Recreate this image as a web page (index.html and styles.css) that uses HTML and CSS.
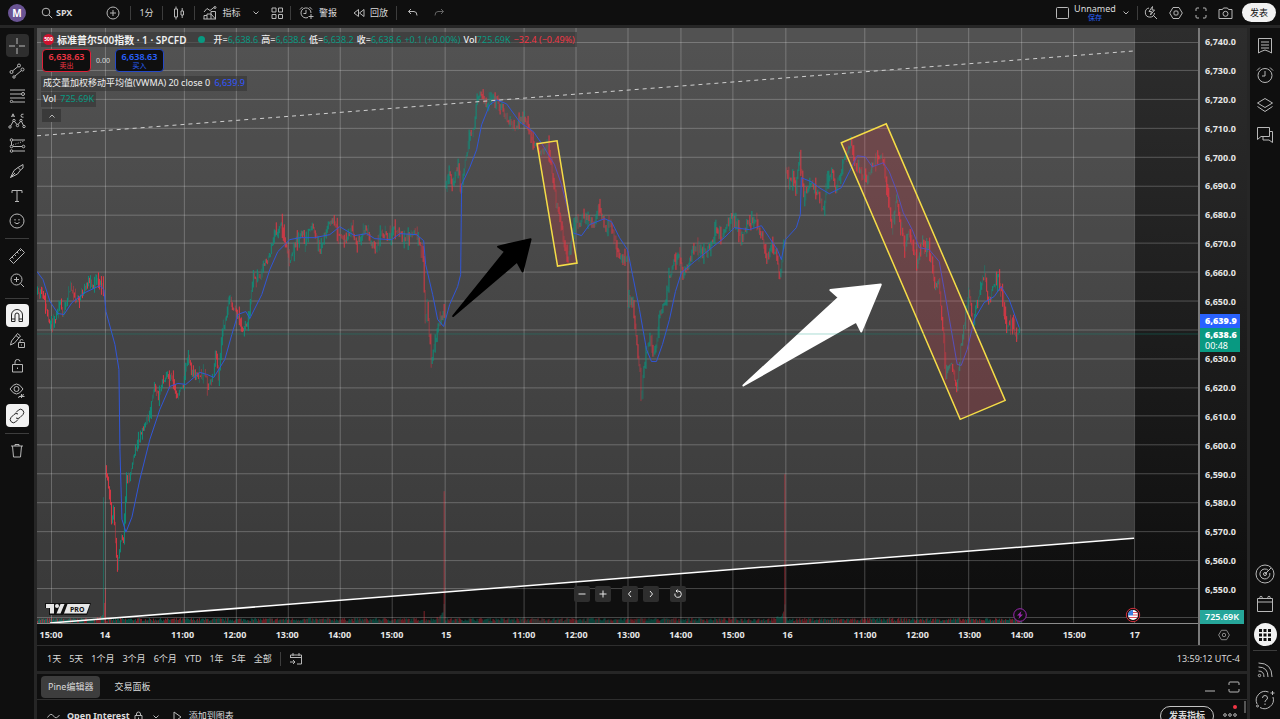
FILE: index.html
```
<!DOCTYPE html>
<html lang="zh-CN">
<head>
	<meta charset="UTF-8">
	<title>SPX 6,638.63</title>
	<link rel="stylesheet" href="styles.css">
</head>
<body>
	<header class="topbar">
		<button class="avatar">M</button>
		<button class="symbol">
			<svg width="12" height="12" viewBox="0 0 12 12"><circle cx="5" cy="5" r="3.8"/><path d="M8 8l3.2 3.2"/></svg>
			<b>SPX</b>
		</button>
		<button class="cell cell-add" aria-label="添加"><svg width="14" height="14" viewBox="0 0 14 14"><circle cx="7" cy="7" r="6"/><path d="M7 4v6M4 7h6"/></svg></button>
		<i class="sep"></i>
		<button class="cell">1分</button>
		<i class="sep"></i>
		<button class="cell" aria-label="K线图"><svg width="12" height="14" viewBox="0 0 12 14"><path d="M1.5 3h3v8h-3zM3 .5V3M3 11v2.5M8 5h2.5v4H8zM9.2 2v3M9.2 9v3"/></svg></button>
		<i class="sep"></i>
		<button class="cell cell-indicators">
			<svg width="14" height="14" viewBox="0 0 14 14"><path d="M1 13V9.500h3V13M4 9.500V8h4v5M8 8V5.500h4.500V13zM.5 13h12.500M1 6l3-3.500 3 2L11.500 1"/><circle cx="12" cy="1.5" r="1"/></svg>
			指标
		</button>
		<button class="cell cell-chevron" aria-label="更多"><svg width="8" height="6" viewBox="0 0 8 6"><path d="M1.5 1.5L4 4l2.5-2.5"/></svg></button>
		<button class="cell cell-layout" aria-label="模板"><svg width="12" height="12" viewBox="0 0 12 12"><path d="M1 1h4v4H1zM7.5 1h4v4h-4zM1 7.5h4v4H1zM7.5 7.5h4v4h-4z"/></svg></button>
		<i class="sep"></i>
		<button class="cell cell-alert">
			<svg width="15" height="14" viewBox="0 0 15 14"><path d="M9 11.500A5 5 0 1 1 12 7M7 4v3.500H4.500M1 3.500L3.500 1M10.500 1L13 3.500M12 8v5M9.500 10.500h5"/></svg>
			警报
		</button>
		<button class="cell cell-replay">
			<svg width="12" height="10" viewBox="0 0 12 10"><path d="M5.500 1.500v7L1 5zM11 1.500v7L6.500 5z"/></svg>
			回放
		</button>
		<i class="sep"></i>
		<button class="cell cell-undo" aria-label="撤销"><svg width="12" height="10" viewBox="0 0 12 10"><path d="M4 1L1.500 3.500 4 6M1.500 3.500H7q3 0 3 4"/></svg></button>
		<button class="cell cell-redo" aria-label="重做"><svg width="12" height="10" viewBox="0 0 12 10"><path d="M8 1l2.500 2.500L8 6M10.500 3.500H5q-3 0-3 4"/></svg></button>

		<div class="topbar-right">
			<button class="cell" aria-label="布局"><svg width="13" height="12" viewBox="0 0 13 12"><rect x=".5" y=".5" width="12" height="11" rx="1"/></svg></button>
			<button class="layout-name"><span>Unnamed</span><small>保存</small></button>
			<button class="cell cell-arrow" aria-label="管理布局"><svg width="8" height="6" viewBox="0 0 8 6"><path d="M1.500 1.500L4 4l2.500-2.500"/></svg></button>
			<i class="sep"></i>
			<button class="cell" aria-label="快速搜索"><svg width="14" height="14" viewBox="0 0 14 14"><path d="M5 2A4.600 4.600 0 1 0 10.500 7M9.500 9.500L13 13M8.500.5L5 5.500h2.500L6.500 9l4-5H8z"/></svg></button>
			<button class="cell" aria-label="设置"><svg width="14" height="14" viewBox="0 0 14 14"><path d="M4 1.500h6L13.300 7 10 12.500H4L.7 7z"/><rect x="5" y="5" width="4" height="4" rx="1"/></svg></button>
			<button class="cell" aria-label="全屏"><svg width="12" height="12" viewBox="0 0 12 12"><path d="M1 4V2q0-1 1-1h2M8 1h2q1 0 1 1v2M11 8v2q0 1-1 1H8M4 11H2q-1 0-1-1V8"/></svg></button>
			<button class="cell" aria-label="快照"><svg width="15" height="12" viewBox="0 0 15 12"><path d="M1 2.500h3.500L5.500 1h4l1 1.500H14v9H1z"/><circle cx="7.500" cy="6.800" r="2.500"/></svg></button>
			<button class="publish">发表</button>
		</div>
	</header>

	<div class="workspace">
		<nav class="tools">
			<button class="tool tool-hover" aria-label="光标"><svg width="18" height="18" viewBox="0 0 18 18"><path d="M9 1v6M9 11v6M1 9h6M11 9h6"/></svg></button>
			<button class="tool" aria-label="趋势线"><svg width="16" height="16" viewBox="0 0 16 16"><path d="M3.500 8l5.500-4.500M6 13l6.500-5.500"/><circle cx="2.500" cy="9" r="1.500"/><circle cx="10" cy="2.500" r="1.500"/><circle cx="5" cy="14" r="1.200"/><circle cx="13.500" cy="6.500" r="1.500"/></svg></button>
			<button class="tool" aria-label="斐波那契"><svg width="17" height="14" viewBox="0 0 17 14"><path d="M1 1h15M1 5h11.500M1 9h15M4 13h12"/><circle cx="14" cy="5" r="1.500"/><circle cx="2.500" cy="12.500" r="1.200"/></svg></button>
			<button class="tool" aria-label="形态"><svg width="18" height="16" viewBox="0 0 18 16"><path d="M2.500 13l3-5M6.500 8.500l2.500 3M10 11.500L12.500 8.500M13.500 8.500l2 4M3.500 4L5 .8 6.500 4M4 3h2M15.500 1.200q-2.500-.5-2.500 1.500t2.500 1.500"/><circle cx="2" cy="14" r="1.200"/><circle cx="6" cy="7.500" r="1.200"/><circle cx="9.500" cy="12.500" r="1.200"/><circle cx="13" cy="7.500" r="1.200"/><circle cx="16" cy="13.500" r="1.200"/></svg></button>
			<button class="tool" aria-label="预测和测量"><svg width="17" height="15" viewBox="0 0 17 15"><path d="M4 2h12M4 8.500h9M4 13h12M2.500 3.500v4"/><path stroke-dasharray="1 1.500" d="M4 7l11-4"/><circle cx="2.500" cy="2" r="1.300"/><circle cx="2.500" cy="8.500" r="1.300"/><circle cx="14.500" cy="8.500" r="1.300"/><circle cx="2.500" cy="13" r="1.300"/></svg></button>
			<button class="tool" aria-label="画笔"><svg width="16" height="16" viewBox="0 0 16 16"><path d="M1.500 14.500L5 7.500 9 4.500l2.500 2.500L8.500 11zM9 4.500L14 1.500v3.500L11.500 7M1.500 14.500L6 10"/></svg></button>
			<button class="tool" aria-label="文本"><svg width="14" height="14" viewBox="0 0 14 14"><path d="M2 4V1.500h10V4M7 1.500v11M5 12.500h4"/></svg></button>
			<button class="tool" aria-label="图标"><svg width="16" height="16" viewBox="0 0 16 16"><circle cx="8" cy="8" r="7"/><path d="M5.500 9.500q2.500 2.500 5 0M6 6v1.500M10 6v1.500"/></svg></button>
			<hr>
			<button class="tool" aria-label="测量"><svg width="18" height="18" viewBox="0 0 18 18"><path d="M1.500 12.500L12.500 1.500l4 4L5.500 16.500zM4 10l1.500 1.500M6.500 7.500L8 9M9 5l1.500 1.500M11.500 2.500L13 4"/></svg></button>
			<button class="tool" aria-label="放大"><svg width="15" height="15" viewBox="0 0 15 15"><circle cx="6.500" cy="6.500" r="5.500"/><path d="M10.500 10.500L14 14M6.500 4v5M4 6.500h5"/></svg></button>
			<hr>
			<button class="tool tool-on" aria-label="磁铁模式"><svg width="14" height="15" viewBox="0 0 14 15"><path d="M1.500 13.500V7a5.500 5.500 0 0 1 11 0v6.500H9V7a2 2 0 0 0-4 0v6.500zM1.500 11H5M9 11h3.500"/></svg></button>
			<button class="tool" aria-label="保持绘图模式"><svg width="17" height="17" viewBox="0 0 17 17"><path d="M1.500 13l1-4 6-7.500 3 2.500-6 7zM7 3.500l3 2.500M9.500 10.500h6v5h-6zM11 10.500V9q0-1.500 1.500-1.500T14 8.500M12.500 12.500v1"/></svg></button>
			<button class="tool" aria-label="锁定绘图"><svg width="13" height="15" viewBox="0 0 13 15"><path d="M1.500 6.500h10V14h-10zM4 6.500V4Q4 1.500 6.500 1.500T9 3.500M6.500 9.500v1.500"/></svg></button>
			<button class="tool" aria-label="隐藏绘图"><svg width="17" height="17" viewBox="0 0 17 17"><path d="M1 7q6.500-10 13 0-6.500 10-13 0z"/><circle cx="7.500" cy="7" r="2.500"/><path d="M9 15.500l6-3M10 14.500h5.500M12.500 12v4"/></svg></button>
			<button class="tool tool-on" aria-label="链接绘图"><svg width="16" height="16" viewBox="0 0 16 16"><path d="M7 4.500l2.500-2.500a3.200 3.200 0 0 1 4.500 4.500L11 9.500a3.200 3.200 0 0 1-4 .5M9 11.500L6.500 14A3.200 3.200 0 0 1 2 9.500l3-3a3.200 3.200 0 0 1 4-.5"/></svg></button>
			<hr>
			<button class="tool" aria-label="删除"><svg width="14" height="15" viewBox="0 0 14 15"><path d="M1 3h12M5 3V1.500h4V3M2.500 3l1 11h7l1-11"/></svg></button>
		</nav>

		<main class="center">
			<section class="chart">
				<div class="plot">
					<svg class="canvas" id="canvas" viewBox="37 28 1162 596" preserveAspectRatio="none">
						<path class="channel" d="M37 28H1135V539L50 624H37z"/>
						<g id="grid"></g>
						<g id="volume"></g>
						<g id="candles"></g>
						<path class="vwma" id="vwma"/>
						<path class="trend-dashed" d="M37 136L1135 51"/>
						<path class="trend" d="M50 624L1135 539"/>
						<path class="zone" d="M537.500 144L557.500 141 577.500 263.500 558 266.500z"/>
						<path class="zone" d="M842 143L887 124 1006 401 961 420z"/>
						<path class="arrow-black" d="M453.500 316.500L505.500 252 498.500 247 531 239.500 523 272 517.500 262z"/>
						<path class="arrow-white" d="M744 386L839.500 298 831 290.500 881.500 285 862 332 857 322z"/>
						<path class="last-price" d="M37 334.500H1199"/>
					</svg>

					<div class="legend">
						<div class="legend-row legend-title">
							<i class="badge-500">500</i>
							<b>标准普尔500指数 · 1 · SPCFD</b>
							<i class="dot"></i>
							<span><b>开=</b><em>6,638.6</em></span>
							<span><b>高=</b><em>6,638.6</em></span>
							<span><b>低=</b><em>6,638.2</em></span>
							<span><b>收=</b><em>6,638.6</em></span>
							<em>+0.1 (+0.00%)</em>
							<span><b>Vol</b><em>725.69K</em></span>
							<em class="down">−32.4 (−0.49%)</em>
						</div>
						<div class="trade">
							<button class="sell"><b>6,638.63</b>卖出</button>
							<span>0.00</span>
							<button class="buy"><b>6,638.63</b>买入</button>
						</div>
						<div class="legend-row study">成交量加权移动平均值(VWMA) 20 close 0 <em class="blue">6,639.9</em></div>
						<div class="legend-row study">Vol <em class="volume">725.69K</em></div>
						<button class="collapse" aria-label="收起"><svg width="8" height="6" viewBox="0 0 8 6"><path d="M1.500 4.500L4 2l2.500 2.500"/></svg></button>
					</div>

					<svg class="tv-logo" width="48" height="14" viewBox="0 0 48 14">
						<path class="logo-edge" d="M1 1h46l-4 12H20l1-2-2 2H5V6H1z"/>
						<path class="logo-fill" d="M2 2h8v9.500H6V6H2zM16.500 2h4L16.500 11.500h-4zM23.500 2H46l-3.500 9.500H20z"/>
						<circle class="logo-fill" cx="13" cy="4" r="2"/>
						<text x="26" y="9.500">PRO</text>
					</svg>

					<div class="zoom-controls">
						<button aria-label="缩小"><svg width="10" height="10" viewBox="0 0 10 10"><path d="M1.500 5h7"/></svg></button>
						<button aria-label="放大"><svg width="10" height="10" viewBox="0 0 10 10"><path d="M1.500 5h7M5 1.500v7"/></svg></button>
						<button class="apart" aria-label="左移"><svg width="10" height="10" viewBox="0 0 10 10"><path d="M6 2L3.500 5 6 8"/></svg></button>
						<button aria-label="右移"><svg width="10" height="10" viewBox="0 0 10 10"><path d="M4 2l2.500 3L4 8"/></svg></button>
						<button class="apart" aria-label="重置"><svg width="10" height="10" viewBox="0 0 10 10"><path d="M2 4.500a3.200 3.200 0 1 0 3-2.500H3M4.500.5L3 2l1.500 1.500"/></svg></button>
					</div>
					<svg class="event event-bolt" width="14" height="14" viewBox="0 0 14 14"><circle cx="7" cy="7" r="6.300"/><path d="M8.500 3L4 7.500h2.500L5.500 11 10 6.500H7.500z"/></svg>
					<svg class="event event-flag" width="16" height="16" viewBox="0 0 16 16">
						<circle class="flag-ring" cx="8" cy="8" r="6.700"/>
						<circle class="flag-base" cx="8" cy="8" r="5"/>
						<path class="flag-stripe" d="M8 5.500h4.500M8 8h5M4 10.500h8"/>
						<path class="flag-blue" d="M8 3a5 5 0 0 0-5 5.500h5z"/>
					</svg>
				</div>

				<div class="prices">
					<span>6,740.0</span><span>6,730.0</span><span>6,720.0</span><span>6,710.0</span><span>6,700.0</span>
					<span>6,690.0</span><span>6,680.0</span><span>6,670.0</span><span>6,660.0</span><span>6,650.0</span>
					<span></span><span>6,630.0</span><span>6,620.0</span><span>6,610.0</span><span>6,600.0</span>
					<span>6,590.0</span><span>6,580.0</span><span>6,570.0</span><span>6,560.0</span><span>6,550.0</span>
					<div class="price-tags">
						<b class="tag-vwma">6,639.9</b>
						<b class="tag-last">6,638.6<small>00:48</small></b>
					</div>
					<b class="tag-volume">725.69K</b>
				</div>

				<div class="times">
					<span class="first">15:00</span><span class="day">14</span>
					<span class="open">11:00</span><span>12:00</span><span>13:00</span><span>14:00</span><span>15:00</span><span class="day">15</span>
					<span class="open">11:00</span><span>12:00</span><span>13:00</span><span>14:00</span><span>15:00</span><span class="day">16</span>
					<span class="open">11:00</span><span>12:00</span><span>13:00</span><span>14:00</span><span>15:00</span><span class="day last">17</span>
				</div>
				<button class="axis-settings" aria-label="坐标设置"><svg width="12" height="12" viewBox="0 0 14 14"><path d="M4 1.500h6L13.300 7 10 12.500H4L.7 7z"/><circle cx="7" cy="7" r="2"/></svg></button>
			</section>

			<section class="ranges">
				<button>1天</button><button>5天</button><button>1个月</button><button>3个月</button><button>6个月</button><button>YTD</button><button>1年</button><button>5年</button><button>全部</button>
				<i class="sep"></i>
				<button class="goto" aria-label="前往到"><svg width="14" height="13" viewBox="0 0 14 13"><path d="M1.500 6V3h11v9H8M1.500 5.500h11M4 1v3M10 1v3M1 10h5M4 8l2 2-2 2"/></svg></button>
				<time>13:59:12 UTC-4</time>
			</section>

			<section class="panel-tabs">
				<button class="active">Pine编辑器</button>
				<button>交易面板</button>
				<div class="panel-actions">
					<button aria-label="最小化"><svg width="12" height="12" viewBox="0 0 12 12"><path d="M1 10h10"/></svg></button>
					<button aria-label="最大化"><svg width="12" height="12" viewBox="0 0 12 12"><path d="M1 4V2q0-1 1-1h8q1 0 1 1v2M11 8v2q0 1-1 1H2q-1 0-1-1V8"/></svg></button>
				</div>
			</section>

			<section class="editor">
				<svg width="13" height="10" viewBox="0 0 13 10"><path d="M.5 6.500Q4 1 6.500 5t6-1"/></svg>
				<b>Open Interest</b>
				<svg class="lock" width="9" height="11" viewBox="0 0 9 11"><path d="M1 4.500h7V10H1zM2.500 4.500V3q0-2 2-2t2 2v1.500M4.500 6.500v1.500"/></svg>
				<svg class="script-menu" width="8" height="6" viewBox="0 0 8 6"><path d="M1.500 1.500L4 4l2.500-2.500"/></svg>
				<button class="add"><svg width="9" height="12" viewBox="0 0 9 12"><path d="M1 1l7 5-7 5z"/></svg>添加到图表</button>
				<button class="publish-script">发表指标</button>
				<button class="more" aria-label="更多"><svg width="14" height="14" viewBox="0 0 14 14"><circle cx="2" cy="10" r="1.300"/><circle cx="7" cy="10" r="1.300"/><circle cx="12" cy="10" r="1.300"/><circle class="alert-dot" cx="12" cy="2" r="2"/></svg></button>
				<i class="scrollbar"></i>
			</section>
		</main>

		<aside class="widgets">
			<button aria-label="自选表"><svg width="16" height="17" viewBox="0 0 16 17"><path d="M1.500 1.500h13V16L12 14.500q-4-3-8 0L1.500 16zM4 5h8M4 8h8M4 11h8"/></svg></button>
			<button aria-label="警报"><svg width="18" height="18" viewBox="0 0 18 18"><circle cx="9" cy="9.500" r="7"/><path d="M9 5v5H6M1 4.500L4 1.500M14 1.500l3 3"/></svg></button>
			<button aria-label="对象树"><svg width="18" height="16" viewBox="0 0 18 16"><path d="M1.500 6L9 1.500 16.500 6 9 10.500zM1.500 9.500L9 14.500l7.500-5"/></svg></button>
			<button aria-label="聊天"><svg width="18" height="18" viewBox="0 0 18 18"><path d="M1.500 1.500h12v9H5l-3.500 3zM13.500 5.500h3V16.500L13 14H7v-3.500"/></svg></button>
			<div class="widgets-bottom">
				<button aria-label="筛选器"><svg width="20" height="20" viewBox="0 0 20 20"><circle cx="10" cy="10" r="9"/><path d="M13.500 6.500A5 5 0 1 0 14.800 9M10 10l6-6"/><circle cx="10" cy="10" r="1.500"/></svg></button>
				<button aria-label="日历"><svg width="18" height="18" viewBox="0 0 18 18"><path d="M1.500 3.500h15v13h-15zM1.500 7h15"/><circle cx="5" cy="2.500" r="1.200"/><circle cx="13" cy="2.500" r="1.200"/></svg></button>
				<button class="apps" aria-label="产品"><svg width="14" height="14" viewBox="0 0 14 14"><path d="M1 1h3v3H1zM5.500 1h3v3h-3zM10 1h3v3h-3zM1 5.500h3v3H1zM5.500 5.500h3v3h-3zM10 5.500h3v3h-3zM1 10h3v3H1zM5.500 10h3v3h-3zM10 10h3v3h-3z"/></svg></button>
				<hr>
				<button aria-label="消息流"><svg width="16" height="16" viewBox="0 0 16 16"><circle cx="2.500" cy="13.500" r="1.200"/><path d="M1.500 9Q7 9 7 15M1.500 5Q11 5 11 15M1.500 1Q15 1 15 15"/></svg></button>
				<button aria-label="帮助"><svg width="20" height="20" viewBox="0 0 20 20"><path d="M13.500 2A9 9 0 0 0 2 14M5 17.500A9 9 0 0 0 18 7M7.500 8q0-2.500 2.500-2.500T12.500 8q0 1-1.300 2T10 12M10 13.500v1.500M17.500 1v4M15.500 3h4"/><circle cx="2.500" cy="16" r="1"/></svg></button>
			</div>
		</aside>
	</div>

	<script src="chart.js"></script>
</body>
</html>
```
FILE: styles.css
```
* {
	margin: 0;
	padding: 0;
	box-sizing: border-box;
}
body {
	display: flex;
	flex-direction: column;
	height: 100vh;
	overflow: hidden;
	background: #262626;
	color: #dbdbdb;
	font: 9px/12px "Noto Sans", "Noto Sans CJK SC", sans-serif;
}
button {
	border: 0;
	background: none;
	color: inherit;
	font: inherit;
	cursor: pointer;
	white-space: nowrap;
}
i, em {
	font-style: normal;
}
svg {
	flex: none;
	fill: none;
	stroke: #b8b8b8;
}
hr {
	width: 24px;
	margin: 4px auto;
	border: 0;
	border-top: 1px solid #3d3d3d;
}
.sep {
	flex: none;
	width: 1px;
	height: 14px;
	background: #3d3d3d;
}

/* top bar */
.topbar {
	display: flex;
	align-items: center;
	flex: none;
	height: 25px;
	margin-bottom: 3px;
	padding: 0 4px 0 8px;
	background: #0f0f0f;
}
.avatar {
	width: 18px;
	height: 18px;
	border-radius: 50%;
	background: #6a5494;
	color: #fff;
	font-size: 10px;
	font-weight: bold;
}
.symbol {
	display: flex;
	align-items: center;
	gap: 3px;
	width: 70px;
	padding-left: 15px;
}
.cell {
	display: flex;
	align-items: center;
	justify-content: center;
	gap: 5px;
	width: 31px;
	height: 24px;
}
.cell-add {
	width: 34px;
}
.cell-indicators {
	width: 52px;
	padding-left: 2px;
}
.cell-chevron {
	width: 17px;
}
.cell-layout {
	width: 26px;
}
.cell-alert {
	width: 54px;
}
.cell-replay {
	width: 51px;
}
.cell-undo {
	width: 32px;
}
.cell-redo {
	width: 20px;
	opacity: 0.5;
}
.topbar-right {
	display: flex;
	align-items: center;
	margin-left: auto;
}
.topbar-right .cell {
	width: 25px;
}
.layout-name {
	display: flex;
	flex-direction: column;
	align-items: center;
	width: 40px;
	line-height: 11px;
}
.layout-name small {
	color: #2962ff;
	font-size: 7px;
	line-height: 8px;
}
.topbar-right .cell-arrow {
	width: 22px;
}
.publish {
	width: 34px;
	height: 19px;
	margin-left: 4px;
	border-radius: 10px;
	background: #f2f2f2;
	color: #0f0f0f;
}

/* side bars */
.workspace {
	display: flex;
	flex: 1;
	min-height: 0;
	gap: 3px;
}
.tools {
	display: flex;
	flex: none;
	flex-direction: column;
	align-items: center;
	width: 34px;
	padding-top: 5px;
	background: #0f0f0f;
}
.tool {
	display: grid;
	place-items: center;
	flex: none;
	width: 23px;
	height: 23px;
	margin: 1px 0;
	border-radius: 4px;
}
.tools hr {
	margin: 5px auto 4px;
}
.tool-hover {
	background: #2e2e2e;
}
.tool-on {
	background: #f2f2f2;
}
.tool-on svg {
	stroke: #222;
}
.widgets {
	display: flex;
	flex: none;
	flex-direction: column;
	width: 30px;
	padding: 2px 0 4px;
	background: #0f0f0f;
}
.widgets button {
	display: grid;
	place-items: center;
	width: 30px;
	height: 30px;
}
.widgets-bottom {
	margin-top: auto;
}
.widgets .apps {
	width: 23px;
	height: 23px;
	margin: 4px auto;
	border-radius: 50%;
	background: #f2f2f2;
}
.apps svg {
	fill: #0f0f0f;
	stroke: none;
}

/* chart */
.center {
	display: flex;
	flex: 1;
	flex-direction: column;
	min-width: 0;
}
.chart {
	display: grid;
	flex: 1;
	grid-template-columns: 1fr 49px;
	grid-template-rows: 1fr 21px;
	min-height: 0;
	background: linear-gradient(#2d2d2d, #0f0f0f 90%);
}
.plot {
	position: relative;
	min-height: 0;
	border-bottom: 1px solid #8c8c8c;
}
.canvas {
	display: block;
	position: absolute;
	width: 100%;
	height: 100%;
}
.channel {
	fill: rgba(255, 255, 255, 0.18);
	stroke: none;
}
.grid-line {
	stroke: rgba(255, 255, 255, 0.24);
}
.up {
	stroke: #089981;
}
.fall {
	stroke: #f23645;
}
#candles {
	opacity: 0.9;
}
#volume {
	opacity: 0.5;
}
.vwma {
	stroke: #3156d8;
}
.last-price {
	stroke: rgba(8, 153, 129, 0.35);
}
.trend-dashed {
	stroke: #d0d0d0;
	stroke-dasharray: 4 4;
}
.trend {
	stroke: #fff;
	stroke-width: 1.5;
}
.zone {
	fill: rgba(242, 54, 69, 0.2);
	stroke: #f5dd47;
	stroke-width: 1.5;
}
.arrow-black,
.arrow-white {
	fill: #000;
	stroke: #000;
	stroke-width: 2;
	stroke-linejoin: round;
}
.arrow-white {
	fill: #fff;
	stroke: #fff;
}

/* legend */
.legend {
	position: absolute;
	top: 4px;
	left: 4px;
	display: flex;
	flex-direction: column;
	align-items: flex-start;
}
.legend em {
	color: #089981;
}
.legend .down {
	color: #f23645;
}
.legend .blue {
	margin-left: 2px;
	color: #3156ff;
}
.legend .volume {
	margin-left: 2px;
}
.legend-row {
	padding: 1px 2px;
	background: rgba(50, 50, 50, 0.55);
	white-space: nowrap;
}
.legend-title {
	display: flex;
	align-items: center;
	gap: 3px;
	height: 15px;
}
.legend-title > b {
	color: #f0f0f0;
	font-size: 10px;
	font-weight: 600;
}
.legend-title span b {
	color: #f0f0f0;
	font-weight: 500;
}
.badge-500 {
	width: 11px;
	height: 11px;
	border-radius: 50%;
	background: #d0122f;
	color: #fff;
	font-size: 5px;
	font-weight: bold;
	line-height: 11px;
	text-align: center;
}
.dot {
	width: 7px;
	height: 7px;
	margin: 0 6px 0 8px;
	border-radius: 50%;
	background: #089981;
}
.trade {
	display: flex;
	align-items: center;
	gap: 5px;
	margin: 2px 0 4px 1px;
	font-size: 7px;
}
.trade button {
	width: 49px;
	height: 23px;
	border: 1px solid #e02038;
	border-radius: 4px;
	background: #0f0f0f;
	color: #f23645;
	line-height: 9px;
}
.trade b {
	display: block;
	font-size: 9px;
	font-weight: 600;
}
.trade .buy {
	border-color: #2448c8;
	color: #2962ff;
}
.study {
	height: 15px;
	margin-bottom: 1px;
	color: #f0f0f0;
}
.collapse {
	display: grid;
	place-items: center;
	width: 19px;
	height: 13px;
	margin: 1px 0 0 1px;
	background: #3a3a3a;
}

/* items lying over the plot */
.tv-logo {
	position: absolute;
	bottom: 7px;
	left: 7px;
	stroke: none;
}
.logo-edge {
	fill: #111;
}
.logo-fill {
	fill: #e6e6e6;
}
.tv-logo text {
	fill: #111;
	font-size: 7px;
	font-weight: bold;
}
.zoom-controls {
	position: absolute;
	right: 0;
	bottom: 21px;
	left: 24px;
	display: flex;
	justify-content: center;
	gap: 5px;
}
.zoom-controls button {
	display: grid;
	place-items: center;
	width: 16px;
	height: 16px;
	border-radius: 2px;
	background: #2e2e2e;
}
.zoom-controls svg {
	stroke: #e6e6e6;
}
.zoom-controls .apart {
	margin-left: 6px;
}
.event {
	position: absolute;
	bottom: 1px;
	left: 84.1%;
}
.event-bolt circle {
	fill: #0f0f0f;
	stroke: #9c27b0;
}
.event-bolt path {
	fill: #9c27b0;
	stroke: none;
}
.event-flag {
	left: 93.7%;
	bottom: 0;
}
.flag-ring {
	fill: #0f0f0f;
	stroke: #d32f3c;
}
.flag-base {
	fill: #fff;
	stroke: none;
}
.flag-stripe {
	stroke: #e05060;
}
.flag-blue {
	fill: #3d7ee0;
	stroke: none;
}

/* axes */
.prices {
	position: relative;
	display: grid;
	grid-template-rows: repeat(20, 29fr) 20fr;
	align-items: center;
	min-height: 0;
	padding-left: 5px;
	border-left: 2px solid #7a7a7a;
	color: #e6e6e6;
	font-weight: 700;
}
.price-tags,
.tag-volume {
	position: absolute;
	left: 0;
	color: #fff;
}
.price-tags {
	top: 48%;
	width: 40px;
}
.price-tags b,
.tag-volume {
	display: block;
	padding: 1px 0 1px 5px;
}
.tag-vwma {
	background: #2962ff;
}
.tag-last {
	background: #089981;
}
.tag-last small {
	display: block;
	font-size: 9px;
	font-weight: normal;
	line-height: 10px;
}
.tag-volume {
	bottom: 0;
	width: 44px;
	background: #26a69a;
	font-weight: 600;
}
.times {
	display: flex;
	align-items: center;
	background: #0f0f0f;
	color: #e6e6e6;
	font-weight: 700;
	text-align: center;
}
.times span {
	flex: 52 0 0;
}
.times .first {
	flex-grow: 28;
	margin-right: 1%;
}
.times .day {
	flex-grow: 56;
}
.times .open {
	margin-left: 2%;
}
.times .last {
	flex-grow: 68;
	margin-right: 2.5%;
}
.axis-settings {
	display: grid;
	place-items: center;
	border-left: 2px solid #7a7a7a;
	background: #0f0f0f;
}
.axis-settings svg {
	stroke: #999;
}

/* bottom panels */
.ranges {
	display: flex;
	align-items: center;
	flex: none;
	gap: 8px;
	height: 26px;
	padding: 0 7px 0 10px;
	border-top: 1px solid #2e2e2e;
	background: #0f0f0f;
}
.goto {
	line-height: 0;
}
.ranges time {
	margin-left: auto;
}
.panel-tabs {
	display: flex;
	align-items: center;
	flex: none;
	height: 26px;
	margin-top: 3px;
	padding: 0 7px 0 4px;
	border-bottom: 1px solid #2e2e2e;
	background: #0f0f0f;
}
.panel-tabs > button {
	height: 22px;
	padding: 0 7px;
	border-radius: 4px;
}
.panel-tabs > button + button {
	margin-left: 7px;
}
.panel-tabs .active {
	background: #3d3d3d;
}
.panel-actions {
	display: flex;
	gap: 12px;
	margin-left: auto;
	line-height: 0;
}
.editor {
	display: flex;
	align-items: flex-start;
	flex: none;
	gap: 7px;
	height: 19px;
	padding: 11px 0 0 10px;
	overflow: hidden;
	background: #0f0f0f;
}
.editor > b {
	line-height: 10px;
}
.editor > .lock {
	margin: 0 2px 0 -3px;
}
.editor > .script-menu {
	margin-top: 3px;
}
.add {
	display: flex;
	gap: 7px;
	margin-left: 6px;
	line-height: 10px;
}
.publish-script {
	flex: none;
	width: 54px;
	height: 20px;
	margin: -5px 2px 0 auto;
	border: 1px solid #c4c4c4;
	border-radius: 10px;
	font-weight: bold;
}
.more {
	margin-top: -6px;
	line-height: 0;
}
.editor .alert-dot {
	fill: #f23645;
	stroke: none;
}
.scrollbar {
	flex: none;
	width: 2px;
	height: 12px;
	margin-top: -10px;
	margin-right: 1px;
	background: #555;
}
```
FILE: chart.js
```
var NS = 'http://www.w3.org/2000/svg';

// one list of turning points (x, y) for each trading session
var sessions = [
	[[37,291],[43,297],[47,308],[51,325],[56,316],[60,304],[64,315],[68,296],[71,286],[77,300],[85,291],[89,280],[94,290],[99,278],[104,290]],
	[[106,468],[109,485],[112,520],[114,512],[118,568],[122,535],[124,540],[127,480],[130,478],[133,462],[138,448],[143,430],[148,422],[152,405],[155,388],[159,400],[163,382],[168,376],[173,380],[179,398],[184,386],[188,355],[192,372],[200,378],[205,371],[209,388],[214,375],[216,352],[219,375],[224,330],[230,299],[236,312],[244,333],[250,315],[254,272],[257,283],[263,270],[269,258],[273,245],[276,236],[282,225],[287,248],[291,262],[295,246],[301,233],[306,240],[313,226],[318,240],[321,250],[326,235],[332,218],[338,230],[344,240],[348,240],[352,230],[358,243],[366,229],[371,240],[377,248],[382,233],[388,238],[394,229],[400,232],[404,243],[414,230],[420,245],[424,255],[426,325],[428,302],[432,362],[436,340],[440,322],[445,314]],
	[[446,188],[450,175],[454,185],[459,167],[462,195],[466,160],[471,135],[475,125],[478,98],[481,92],[487,105],[493,97],[500,103],[508,120],[516,128],[524,117],[530,130],[534,140],[540,152],[544,155],[549,147],[553,175],[557,202],[562,225],[566,250],[569,262],[573,232],[577,220],[580,226],[584,214],[590,220],[595,228],[599,206],[603,215],[607,235],[611,221],[617,245],[621,258],[628,260],[629,300],[634,303],[637,340],[641,372],[642,402],[645,365],[651,340],[654,356],[658,340],[661,312],[666,305],[670,280],[675,262],[681,258],[684,275],[691,262],[695,248],[700,250],[707,255],[713,242],[717,229],[723,241],[728,225],[733,216],[738,226],[743,240],[750,219],[758,225],[763,235],[768,260],[773,248],[777,255],[781,280],[783,260],[785,240]],
	[[787,170],[790,180],[794,178],[797,190],[801,158],[805,195],[812,183],[820,195],[824,212],[828,185],[833,170],[837,188],[841,175],[845,160],[852,142],[856,165],[862,175],[868,180],[874,163],[880,155],[884,158],[889,195],[893,225],[898,200],[902,230],[906,248],[910,232],[914,245],[919,265],[924,245],[930,245],[934,270],[936,288],[940,280],[944,330],[947,375],[951,362],[955,372],[958,390],[962,350],[966,320],[970,290],[974,325],[978,305],[982,290],[986,275],[990,305],[995,285],[1000,277],[1004,300],[1008,330],[1013,323],[1017,338],[1021,333]]
];

var vwma = [[37,272],[43,280],[50,302],[58,314],[64,315],[72,303],[85,293],[100,286],[104,290],[106,312],[115,345],[119,370],[120,450],[122,520],[126,533],[132,518],[140,480],[150,440],[160,410],[170,387],[178,384],[186,385],[200,373],[207,375],[214,378],[225,360],[232,335],[238,315],[246,312],[250,319],[262,295],[270,270],[278,252],[290,240],[300,238],[315,238],[330,235],[340,227],[355,236],[367,234],[375,239],[392,240],[400,234],[417,235],[424,241],[426,265],[433,295],[438,320],[444,327],[450,305],[458,287],[461,275],[462,185],[470,168],[477,150],[482,125],[490,105],[497,100],[507,104],[520,122],[534,132],[543,145],[555,165],[562,185],[567,205],[573,233],[582,236],[590,225],[605,219],[612,222],[620,238],[628,250],[633,275],[640,310],[647,350],[652,362],[657,362],[663,345],[670,320],[676,292],[682,273],[695,262],[710,250],[725,238],[735,228],[750,230],[762,226],[770,238],[778,250],[782,260],[786,240],[797,228],[801,215],[802,178],[812,182],[820,188],[830,194],[842,188],[850,172],[858,156],[866,157],[873,167],[884,163],[890,172],[897,190],[904,213],[913,230],[920,248],[930,250],[940,262],[945,290],[952,330],[958,365],[962,366],[968,350],[975,320],[985,303],[995,297],[1002,287],[1010,300],[1020,328]];

var seed = 7;
function random() {
	seed = (seed * 16807) % 2147483647;
	return seed / 2147483647;
}

function line(parent, cls, x1, y1, x2, y2) {
	var el = document.createElementNS(NS, 'path');
	el.setAttribute('class', cls);
	el.setAttribute('d', 'M' + x1 + ' ' + y1 + 'L' + x2 + ' ' + y2);
	document.getElementById(parent).appendChild(el);
	return el;
}

function drawGrid() {
	var hours = [51, 105, 184, 236, 288, 340, 392, 445, 524, 576, 628, 681, 733, 786, 865, 917, 969, 1022, 1074, 1135];
	for (var i = 0; i < hours.length; i++) {
		line('grid', 'grid-line', hours[i] + 0.5, 28, hours[i] + 0.5, 624);
	}
	for (var j = 0; j < 21; j++) {
		var y = Math.floor(42 + j * 28.84) + 0.5;
		line('grid', 'grid-line', 37, y, 1199, y);
	}
}

function drawSession(points) {
	var prev = points[0][1];
	for (var i = 1; i < points.length; i++) {
		var a = points[i - 1], b = points[i];
		for (var x = a[0]; x < b[0]; x++) {
			var y = a[1] + (b[1] - a[1]) * (x - a[0] + 1) / (b[0] - a[0]) + (random() - 0.5) * 8;
			var wick = random() < 0.35 ? 10 : 3;
			var top = Math.min(prev, y) - random() * wick;
			var bottom = Math.max(prev, y) + random() * wick;
			var bar = line('candles', y < prev ? 'up' : 'fall', x + 0.5, top, x + 0.5, bottom);
			bar.setAttribute('stroke-opacity', random() < 0.35 ? 0.5 : 1);
			prev = y;
		}
	}
}

function drawVolume() {
	for (var x = 37; x < 1022; x++) {
		var h = 2 + random() * 3;
		// volume builds up towards each close
		[105, 445, 786].forEach(function (close) {
			if (x < close && close - x < 10) {
				h += 16 / (close - x);
			}
		});
		line('volume', random() < 0.6 ? 'up' : 'fall', x + 0.5, 624 - h, x + 0.5, 624);
	}
	line('volume', 'up', 103.5, 498, 103.5, 624);
	line('volume', 'fall', 105.5, 590, 105.5, 624);
	line('volume', 'fall', 444.5, 492, 444.5, 624);
	line('volume', 'fall', 785.5, 475, 785.5, 624);
	line('volume', 'fall', 424.5, 612, 424.5, 624);
}

drawGrid();
drawVolume();
sessions.forEach(drawSession);
document.getElementById('vwma').setAttribute('d', 'M' + vwma.join('L'));
```
